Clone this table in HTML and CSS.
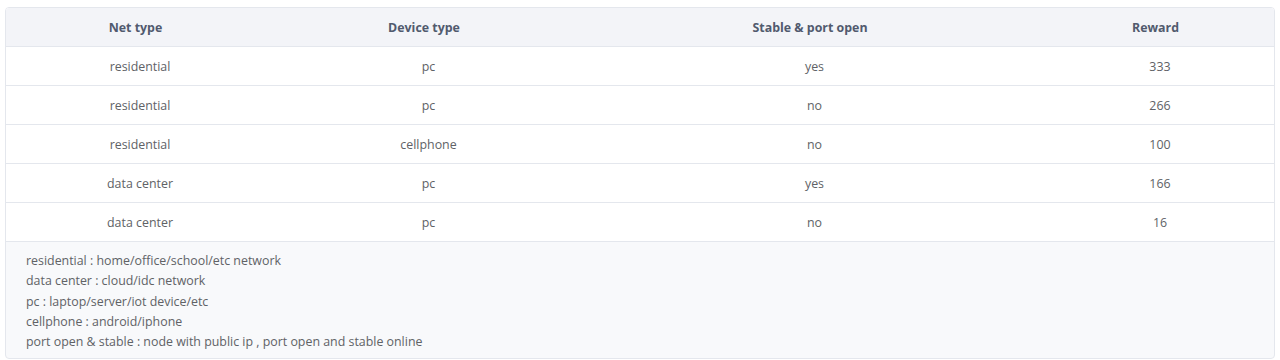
FILE: index.html
```html
<!DOCTYPE html>
<html>
<head>
<meta charset="utf-8">
<link rel="stylesheet" href="styles.css">
</head>
<body>
<div class="panel">
  <table class="grid">
    <colgroup>
      <col class="c1"><col class="c2"><col class="c3"><col class="c4">
    </colgroup>
    <thead>
      <tr><th>Net type</th><th>Device type</th><th>Stable &amp; port open</th><th>Reward</th></tr>
    </thead>
    <tbody>
      <tr><td>residential</td><td>pc</td><td>yes</td><td>333</td></tr>
      <tr><td>residential</td><td>pc</td><td>no</td><td>266</td></tr>
      <tr><td>residential</td><td>cellphone</td><td>no</td><td>100</td></tr>
      <tr><td>data center</td><td>pc</td><td>yes</td><td>166</td></tr>
      <tr><td>data center</td><td>pc</td><td>no</td><td>16</td></tr>
    </tbody>
  </table>
  <div class="notes">
    <p>residential : home/office/school/etc network</p>
    <p>data center : cloud/idc network</p>
    <p>pc : laptop/server/iot device/etc</p>
    <p>cellphone : android/iphone</p>
    <p>port open &amp; stable : node with public ip , port open and stable online</p>
  </div>
</div>
</body>
</html>
```
FILE: styles.css
```css
html, body { margin: 0; padding: 0; background: #fff; }
body { padding: 7px 5px 0 5px; font-family: "Open Sans", "Noto Sans", sans-serif; font-size: 12.4px; color: #515a6e; }
.panel { border: 1px solid #e4e7ed; border-radius: 4px; overflow: hidden; background: #f8f9fb; }
.grid { width: 100%; border-collapse: collapse; table-layout: fixed; background: #fff; }
.c1 { width: 259px; }
.c2 { width: 318px; }
.c3 { width: 454px; }
.grid th { background: #f3f4f8; font-weight: 700; color: #515a6e; height: 38px; padding: 0; text-align: center; border-bottom: 1px solid #e4e7ed; }
.grid td { height: 38px; padding: 0 0 0 9px; text-align: center; color: #606266; border-bottom: 1px solid #e4e7ed; }
.notes { padding: 9px 20px 6px 20px; color: #606266; }
.notes p { margin: 0; line-height: 20.3px; }
```
